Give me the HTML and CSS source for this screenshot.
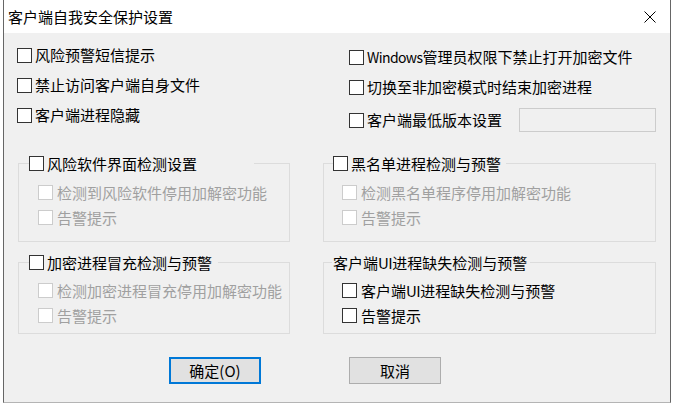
FILE: index.html
```html
<!DOCTYPE html>
<html lang="zh-CN">
<head>
<meta charset="utf-8">
<title>客户端自我安全保护设置</title>
<link rel="stylesheet" href="styles.css">
</head>
<body>
<div class="dialog">
  <div class="titlebar">
    <span class="title">客户端自我安全保护设置</span>
    <span class="close">
      <svg width="12" height="12" viewBox="0 0 12 12"><path d="M0.5 0.5 L11.5 11.5 M11.5 0.5 L0.5 11.5" stroke="#000" stroke-width="1" fill="none"/></svg>
    </span>
  </div>
  <div class="content">
    <div class="top">
      <div class="col col-left">
        <div class="row"><span class="box"></span><span class="txt">风险预警短信提示</span></div>
        <div class="row"><span class="box"></span><span class="txt">禁止访问客户端自身文件</span></div>
        <div class="row"><span class="box"></span><span class="txt">客户端进程隐藏</span></div>
      </div>
      <div class="col col-right">
        <div class="row"><span class="box"></span><span class="txt"><span class="latin">Windows</span>管理员权限下禁止打开加密文件</span></div>
        <div class="row"><span class="box"></span><span class="txt">切换至非加密模式时结束加密进程</span></div>
        <div class="row row-tall"><span class="box"></span><span class="txt">客户端最低版本设置</span><span class="field"></span></div>
      </div>
    </div>

    <div class="groups groups-1">
      <fieldset class="group group-left">
        <legend class="legend lg-1"><span class="lg-inner"><span class="box"></span><span class="txt">风险软件界面检测设置</span></span></legend>
        <div class="grow disabled"><span class="box"></span><span class="txt">检测到风险软件停用加解密功能</span></div>
        <div class="grow disabled"><span class="box"></span><span class="txt">告警提示</span></div>
      </fieldset>
      <fieldset class="group group-right">
        <legend class="legend lg-2"><span class="lg-inner"><span class="box"></span><span class="txt">黑名单进程检测与预警</span></span></legend>
        <div class="grow disabled"><span class="box"></span><span class="txt">检测黑名单程序停用加解密功能</span></div>
        <div class="grow disabled"><span class="box"></span><span class="txt">告警提示</span></div>
      </fieldset>
    </div>

    <div class="groups groups-2">
      <fieldset class="group group-left">
        <legend class="legend lg-3"><span class="lg-inner"><span class="box"></span><span class="txt">加密进程冒充检测与预警</span></span></legend>
        <div class="grow disabled"><span class="box"></span><span class="txt">检测加密进程冒充停用加解密功能</span></div>
        <div class="grow disabled"><span class="box"></span><span class="txt">告警提示</span></div>
      </fieldset>
      <fieldset class="group group-right">
        <legend class="legend lg-4"><span class="lg-inner"><span class="txt">客户端<span class="latin-ui">UI</span>进程缺失检测与预警</span></span></legend>
        <div class="grow"><span class="box"></span><span class="txt">客户端<span class="latin-ui">UI</span>进程缺失检测与预警</span></div>
        <div class="grow"><span class="box"></span><span class="txt">告警提示</span></div>
      </fieldset>
    </div>

    <div class="buttons">
      <button class="btn btn-default" type="button">确定(O)</button>
      <button class="btn" type="button">取消</button>
    </div>
  </div>
</div>
</body>
</html>
```
FILE: styles.css
```css
html, body {
  margin: 0;
  padding: 0;
}
body {
  width: 674px;
  height: 406px;
  overflow: hidden;
  background: #ffffff;
  font-family: "Noto Sans CJK SC", "Noto Sans", sans-serif;
  font-size: 15px;
  color: #000;
}
.dialog {
  margin-left: 3px;
  width: 668px;
  height: 403px;
  box-sizing: border-box;
  border-left: 1px solid #666;
  border-right: 1px solid #666;
  border-bottom: 1px solid #b4b4b4;
  background: #f0f0f0;
  display: flex;
  flex-direction: column;
}
.titlebar {
  height: 33px;
  flex: none;
  background: #ffffff;
  display: flex;
  align-items: center;
  padding-left: 4px;
}
.title {
  line-height: 16px;
  white-space: nowrap;
}
.close {
  margin-left: auto;
  width: 40px;
  height: 33px;
  display: flex;
  align-items: center;
  justify-content: center;
}
.close svg { display: block; }
.content {
  flex: 1;
  padding-left: 13px;
}
.top {
  display: grid;
  grid-template-columns: 332px 307px;
  height: 105px;
}
.col-left { padding-top: 7px; }
.col-right { padding-top: 9px; }
.row {
  display: flex;
  align-items: center;
  height: 30px;
  line-height: 16px;
  white-space: nowrap;
}
.row-tall { height: 36px; }
.box {
  flex: none;
  width: 15px;
  height: 15px;
  box-sizing: border-box;
  border: 1px solid #333;
  background: #fff;
  margin-right: 3px;
}
.txt { white-space: nowrap; }
.latin {
  font-size: 14px;
  letter-spacing: -0.6px;
}
.latin-ui {
  letter-spacing: -0.5px;
}
.field {
  margin-left: auto;
  width: 137px;
  height: 24px;
  box-sizing: border-box;
  border: 1px solid #cccccc;
  background: #f0f0f0;
}
.groups {
  display: grid;
  grid-template-columns: 272px 333px;
  column-gap: 33px;
  margin-left: 1px;
}
.groups-1 { margin-top: 18px; }
.groups-2 { margin-top: 13px; }
.group {
  margin: 0;
  min-width: 0;
  border: 1px solid #dcdcdc;
  padding: 0;
}
.groups-1 .group { padding-top: 9px; padding-bottom: 11px; }
.groups-2 .group { padding-top: 8px; padding-bottom: 5px; }
.group-left { padding-left: 19px; }
.group-right { padding-left: 18px; }
.legend {
  padding: 0;
  height: 15px;
  line-height: 15px;
  box-sizing: border-box;
}
.lg-inner {
  display: flex;
  align-items: center;
  height: 15px;
  white-space: nowrap;
}
.group-left .legend { margin-left: -9px; }
.lg-1 { width: 225px; }
.lg-3 { width: 189px; }
.group-right .lg-2 { margin-left: -9px; width: 173px; }
.group-right .lg-4 { margin-left: -10px; width: 198px; padding-left: 1px; }
.grow {
  display: flex;
  align-items: center;
  height: 25px;
  line-height: 16px;
  white-space: nowrap;
}
.grow .box { margin-right: 4px; }
.disabled { color: #a0a0a0; }
.disabled .box {
  border-color: #cccccc;
  background: #ffffff;
}
.buttons {
  display: flex;
  margin-top: 23px;
  margin-left: 152px;
  gap: 88px;
}
.btn {
  width: 92px;
  height: 27px;
  box-sizing: border-box;
  margin: 0;
  padding: 0;
  background: #e1e1e1;
  border: 1px solid #adadad;
  font-family: "Noto Sans CJK SC", "Noto Sans", sans-serif;
  font-size: 15px;
  line-height: 16px;
  color: #000;
}
.btn-default {
  border: 2px solid #0078d7;
}
```
